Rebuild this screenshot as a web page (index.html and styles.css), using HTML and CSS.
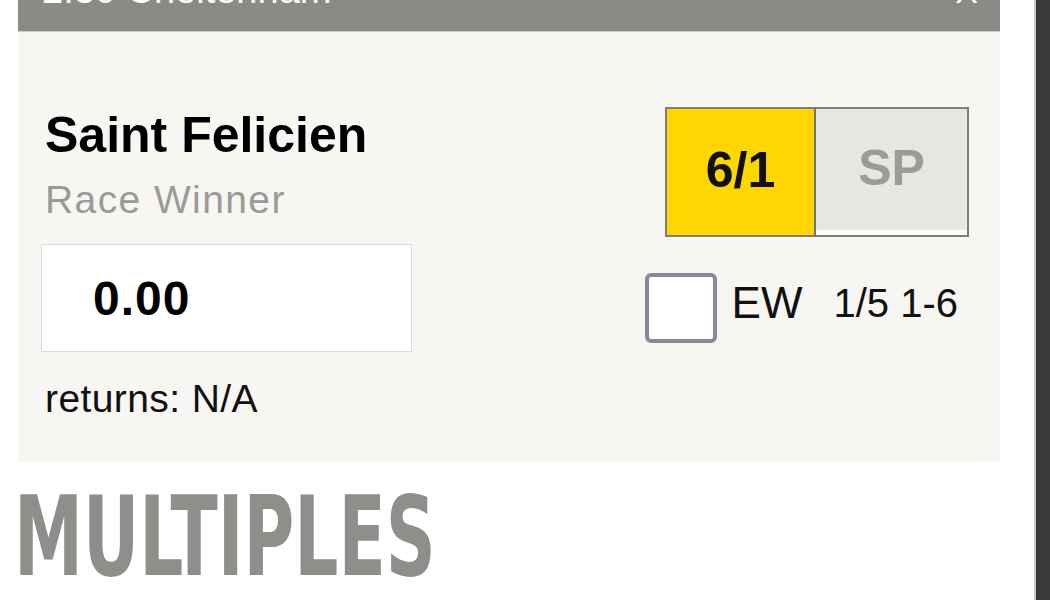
FILE: index.html
```html
<!DOCTYPE html>
<html>
<head>
<meta charset="utf-8">
<link rel="stylesheet" href="styles.css">
</head>
<body>
<div class="page">
  <div class="slip">
    <div class="slip-header">
      <span class="event">2:30 Cheltenham</span>
      <span class="close">X</span>
    </div>
    <div class="bet">
      <div class="bet-left">
        <div class="runner">Saint Felicien</div>
        <div class="market">Race Winner</div>
        <input class="stake" type="text" value="0.00">
        <div class="returns">returns: N/A</div>
      </div>
      <div class="bet-right">
        <div class="odds">
          <div class="odds-cell price">6/1</div>
          <div class="odds-cell sp">SP</div>
        </div>
        <label class="ew-row">
          <span class="checkbox"></span>
          <span class="ew-text">EW</span>
          <span class="ew-terms">1/5 1-6</span>
        </label>
      </div>
    </div>
    <div class="multiples"><span class="multiples-text">MULTIPLES</span></div>
  </div>
  <div class="scrollbar"></div>
</div>
</body>
</html>
```

FILE: styles.css
```css
html, body {
  margin: 0;
  padding: 0;
  background: #ffffff;
}

.page {
  display: flex;
  height: 600px;
  overflow: hidden;
  font-family: "Liberation Sans", Arial, sans-serif;
}

.slip {
  margin-left: 18px;
  width: 982px;
  flex: none;
}

.slip-header {
  height: 31px;
  background: #8b8a86;
  border-bottom: 1px solid #cfceca;
  display: flex;
  justify-content: space-between;
  align-items: flex-start;
  overflow: hidden;
  padding: 0 22px 0 24px;
  color: #ffffff;
}

.event {
  font-size: 38px;
  line-height: 38px;
  margin-top: -29px;
}

.close {
  font-size: 34px;
  line-height: 34px;
  margin-top: -26px;
}

.bet {
  background: #f7f6f2;
  display: flex;
  justify-content: space-between;
  padding: 75px 31px 43px 27px;
}

.bet-left {
  display: flex;
  flex-direction: column;
  align-items: flex-start;
}

.runner {
  font-weight: 700;
  font-size: 50px;
  line-height: 56px;
  color: #000000;
}

.market {
  margin-top: 17px;
  font-size: 39px;
  line-height: 40px;
  letter-spacing: 1.4px;
  color: #9a9a98;
}

.stake {
  margin: 24px 0 0 -4px;
  width: 371px;
  height: 108px;
  box-sizing: border-box;
  border: 1px solid #dcdcda;
  background: #ffffff;
  padding: 0 0 0 51px;
  font-family: "Liberation Sans", Arial, sans-serif;
  font-weight: 700;
  font-size: 48px;
  letter-spacing: 1px;
  color: #000000;
  outline: none;
}

.returns {
  margin-top: 27px;
  font-size: 39px;
  line-height: 40px;
  letter-spacing: 0.4px;
  color: #111111;
}

.bet-right {
  display: flex;
  flex-direction: column;
  align-items: flex-end;
}

.odds {
  display: flex;
  width: 304px;
  height: 130px;
  box-sizing: border-box;
  border: 2px solid #7e7d7a;
}

.odds-cell {
  display: flex;
  align-items: center;
  justify-content: center;
  font-weight: 700;
  font-size: 50px;
  padding-bottom: 4px;
  box-sizing: border-box;
}

.price {
  width: 149px;
  background: #ffd600;
  border-right: 2px solid #74736f;
  color: #111111;
}

.sp {
  flex: 1;
  background: #e7e6e2;
  border-bottom: 5px solid #fcfcfb;
  color: #9c9b99;
}

.ew-row {
  margin-top: 36px;
  margin-right: 11px;
  display: flex;
  align-items: center;
}

.checkbox {
  width: 72px;
  height: 70px;
  box-sizing: border-box;
  border: 4px solid #8c889a;
  border-radius: 6px;
  background: #ffffff;
}

.ew-text,
.ew-terms {
  line-height: 40px;
  margin-bottom: 11px;
  color: #111111;
}

.ew-text {
  font-size: 44px;
  margin-left: 15px;
}

.ew-terms {
  margin-left: 31px;
  font-size: 40px;
}

.multiples {
  margin-top: 20px;
  height: 110px;
  line-height: 110px;
}

.multiples-text {
  display: inline-block;
  margin-left: -4px;
  font-family: "DejaVu Sans Condensed", "DejaVu Sans", sans-serif;
  font-stretch: condensed;
  font-weight: 700;
  font-size: 110px;
  color: #8f8e8b;
  transform-origin: left top;
  transform: scaleX(0.7);
}

.scrollbar {
  margin-left: auto;
  flex: none;
  width: 14px;
  height: 600px;
  border-left: 2px solid #c9c8c6;
  background: #3b3a38;
}
```
